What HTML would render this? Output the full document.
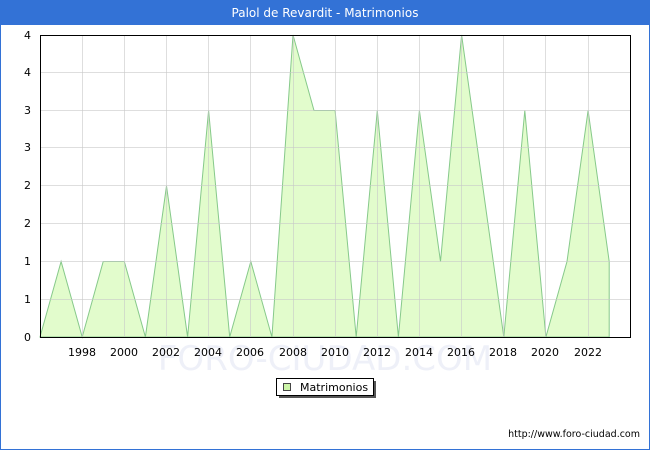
<!DOCTYPE html>
<html><head><style>
body{margin:0;width:650px;height:450px;overflow:hidden;font-family:"DejaVu Sans","Liberation Sans",sans-serif;}
</style></head><body>
<svg width="650" height="450" xmlns="http://www.w3.org/2000/svg" font-family="DejaVu Sans, Liberation Sans, sans-serif">
<rect x="0.5" y="0.5" width="649" height="449" fill="#fff" stroke="#3372d6"/>
<rect x="0" y="0" width="650" height="25" fill="#3372d6"/>
<text x="325" y="17" font-size="12" fill="#fff" text-anchor="middle">Palol de Revardit - Matrimonios</text>
<text x="325" y="370" font-size="34" fill="#eef0f8" text-anchor="middle">FORO-CIUDAD.COM</text>
<polygon fill="#e2fccc" stroke="#86c98a" stroke-width="1" points="40,337 61.1,261.5 82.2,337 103.2,261.5 124.3,261.5 145.4,337 166.5,186 187.6,337 208.6,110.5 229.7,337 250.8,261.5 271.9,337 293,35 314,110.5 335.1,110.5 356.2,337 377.3,110.5 398.4,337 419.4,110.5 440.5,261.5 461.6,35 482.7,186 503.8,337 524.8,110.5 545.9,337 567,261.5 588.1,110.5 609.2,261.5 609.2,337"/>
<g stroke="#c8c8c8" stroke-opacity="0.6" stroke-width="1">
<line x1="40" y1="299.5" x2="630" y2="299.5"/><line x1="40" y1="261.5" x2="630" y2="261.5"/>
<line x1="40" y1="223.5" x2="630" y2="223.5"/><line x1="40" y1="185.5" x2="630" y2="185.5"/>
<line x1="40" y1="147.5" x2="630" y2="147.5"/><line x1="40" y1="110.5" x2="630" y2="110.5"/>
<line x1="40" y1="72.5" x2="630" y2="72.5"/>
<line x1="82.5" y1="35" x2="82.5" y2="337"/><line x1="124.5" y1="35" x2="124.5" y2="337"/>
<line x1="166.5" y1="35" x2="166.5" y2="337"/><line x1="208.5" y1="35" x2="208.5" y2="337"/>
<line x1="250.5" y1="35" x2="250.5" y2="337"/><line x1="293.5" y1="35" x2="293.5" y2="337"/>
<line x1="335.5" y1="35" x2="335.5" y2="337"/><line x1="377.5" y1="35" x2="377.5" y2="337"/>
<line x1="419.5" y1="35" x2="419.5" y2="337"/><line x1="461.5" y1="35" x2="461.5" y2="337"/>
<line x1="503.5" y1="35" x2="503.5" y2="337"/><line x1="545.5" y1="35" x2="545.5" y2="337"/>
<line x1="588.5" y1="35" x2="588.5" y2="337"/>
</g>
<rect x="40.5" y="35.5" width="590" height="302" fill="none" stroke="#000"/>
<g font-size="11" fill="#000" text-anchor="end">
<text x="31" y="341">0</text><text x="31" y="303">1</text><text x="31" y="265">1</text>
<text x="31" y="227">2</text><text x="31" y="189">2</text><text x="31" y="151">3</text>
<text x="31" y="114">3</text><text x="31" y="76">4</text><text x="31" y="39">4</text>
</g>
<g font-size="11" fill="#000" text-anchor="middle">
<text x="82" y="356">1998</text><text x="124" y="356">2000</text><text x="166" y="356">2002</text>
<text x="208" y="356">2004</text><text x="250" y="356">2006</text><text x="293" y="356">2008</text>
<text x="335" y="356">2010</text><text x="377" y="356">2012</text><text x="419" y="356">2014</text>
<text x="461" y="356">2016</text><text x="503" y="356">2018</text><text x="545" y="356">2020</text>
<text x="588" y="356">2022</text>
</g>
<rect x="279" y="381" width="97" height="17" fill="#555"/>
<rect x="276.5" y="378.5" width="97" height="17" fill="#fff" stroke="#000"/>
<rect x="283.5" y="383.5" width="7" height="7" fill="#ccf5a8" stroke="#444"/>
<text x="300" y="391" font-size="11">Matrimonios</text>
<text x="640" y="437" font-size="9.5" text-anchor="end">http://www.foro-ciudad.com</text>
</svg>
</body></html>
